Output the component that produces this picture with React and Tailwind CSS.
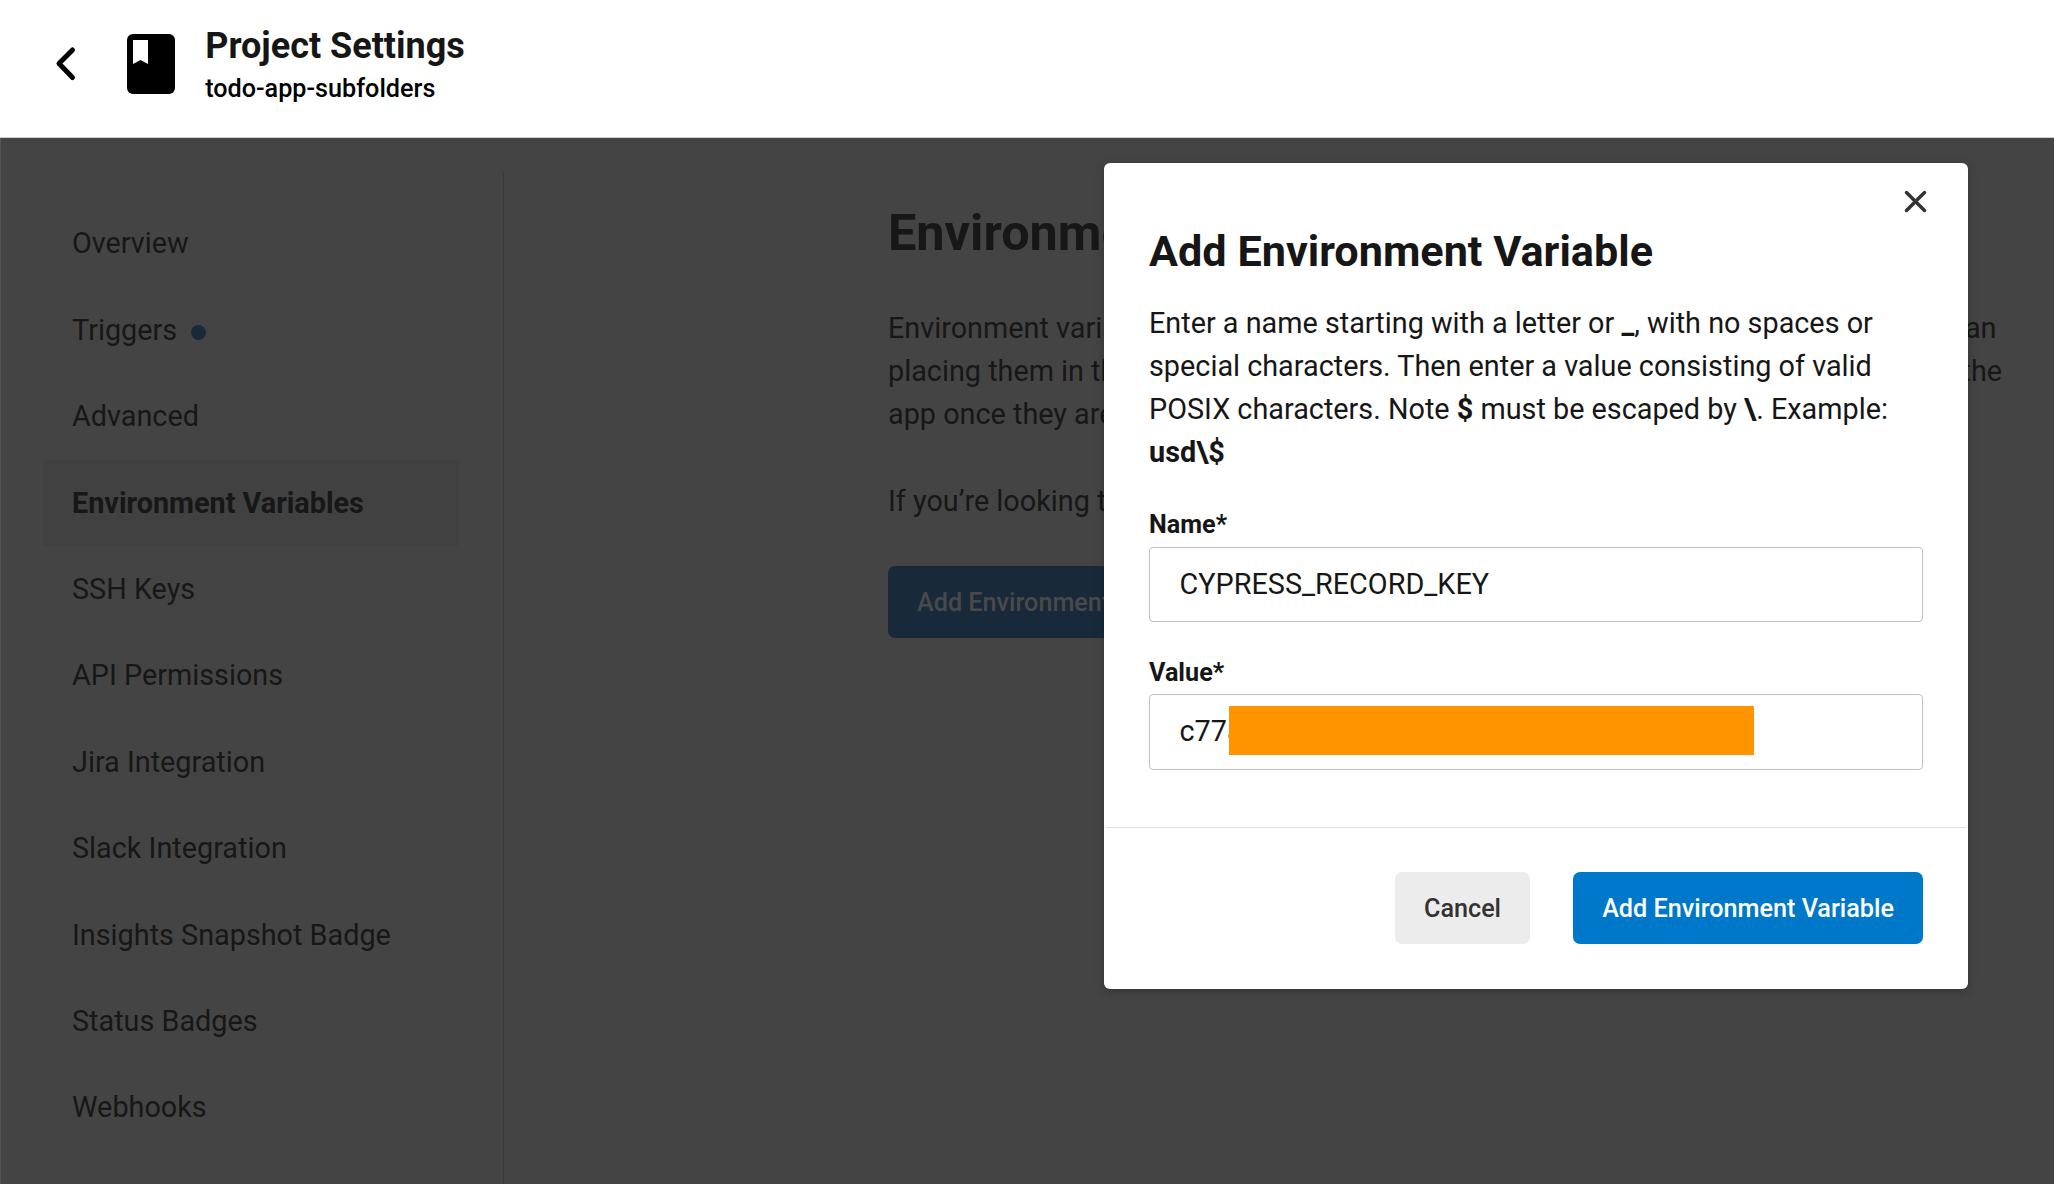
const navItems = [
  { label: "Overview" },
  { label: "Triggers", dot: true },
  { label: "Advanced" },
  { label: "Environment Variables", active: true },
  { label: "SSH Keys" },
  { label: "API Permissions" },
  { label: "Jira Integration" },
  { label: "Slack Integration" },
  { label: "Insights Snapshot Badge" },
  { label: "Status Badges" },
  { label: "Webhooks" },
];

function Header() {
  return (
    <header className="flex h-[138px] shrink-0 border-b border-[#cfcfcf] bg-white">
      <svg className="mt-[44px] ml-[52px] h-[39px] w-[27px] shrink-0" viewBox="0 0 27 39" fill="none" stroke="#000" strokeWidth="5" strokeLinecap="round" strokeLinejoin="round">
        <path d="M20.500 6L7 19.500L20.500 33.500" />
      </svg>
      <svg className="mt-[34px] ml-[48px] h-[60px] w-[48px] shrink-0" viewBox="0 0 48 60">
        <rect width="48" height="60" rx="6" fill="#000" />
        <path d="M6 6H21V30L13.500 26L6 30Z" fill="#fff" />
      </svg>
      <div className="ml-[30.200px] flex flex-col pt-[21px] whitespace-nowrap">
        <h1 className="text-[36px] leading-[50px] font-bold text-[#161616]">Project Settings</h1>
        <p className="text-[25.2px] leading-[36px] font-medium text-black">todo-app-subfolders</p>
      </div>
    </header>
  );
}

function Sidebar() {
  return (
    <nav className="mt-[34px] w-[503px] shrink-0 border-r border-[#393939] pt-[28.800px] pl-[42px]">
      {navItems.map((item) => (
        <div
          key={item.label}
          className={`flex h-[86.400px] w-[416px] items-center pl-[29px] text-[28.800px] whitespace-nowrap ${item.active ? "bg-[#414141] font-bold" : ""}`}
        >
          {item.label}
          {item.dot && <span className="mt-1 ml-[14px] size-[15px] rounded-full bg-[#182a3a]" />}
        </div>
      ))}
    </nav>
  );
}

function Content() {
  return (
    <main className="ml-[384px] pt-[58px] whitespace-nowrap">
      <h2 className="text-[50.400px] leading-[74px] font-bold">Environment Variables</h2>
      <p className="mt-[37px] text-[28.800px] leading-[43.200px]">
        Environment variables let you add sensitive data (e.g. API keys) to your jobs rather than
        <br />
        placing them in the repository. The value of the variables cannot be read or edited in the
        <br />
        app once they are set.
      </p>
      <p className="mt-[43.200px] text-[28.800px] leading-[43.200px]">
        If you’re looking to share environment variables across projects, try Contexts.
      </p>
      <button className="mt-[43px] h-[72px] rounded-[7px] bg-[#182a3a] px-[29px] pt-[1px] text-[25.200px] font-medium text-[#494949]">
        Add Environment Variable
      </button>
    </main>
  );
}

function Field({ label, value, className, inputClassName, redacted }) {
  return (
    <div className={className}>
      <div className="text-[25.200px] leading-[36px] font-bold">{label}</div>
      <div className={`relative flex items-center rounded-[4px] border border-[#bfbfbf] pl-[29.500px] text-[28.800px] ${inputClassName}`}>
        {value}
        {redacted && <span className="absolute top-[11px] left-[79px] h-[49px] w-[525px] bg-[#ff9300]" />}
      </div>
    </div>
  );
}

function Dialog() {
  return (
    <section className="absolute top-[163px] left-[1104px] flex h-[826px] w-[864px] flex-col rounded-[6px] bg-white text-[#161616] shadow-[0_2px_10px_rgba(0,0,0,0.250)]">
      <div className="flex h-[62px] justify-end pt-[26px] pr-[41px]">
        <svg className="size-[24px]" viewBox="0 0 24 24" fill="none" stroke="#333" strokeWidth="3.500" strokeLinecap="round">
          <path d="M3.500 3.500L21.500 21.500M21.500 3.500L3.500 21.500" />
        </svg>
      </div>
      <div className="px-[45px] whitespace-nowrap">
        <h2 className="text-[43.200px] leading-[54px] font-bold">Add Environment Variable</h2>
        <p className="mt-[23px] text-[28.800px] leading-[43px]">
          Enter a name starting with a letter or <b>_</b>, with no spaces or
          <br />
          special characters. Then enter a value consisting of valid
          <br />
          POSIX characters. Note <b>$</b> must be escaped by <b>\</b>. Example:
          <br />
          <b>usd\$</b>
        </p>
        <Field label="Name*" value="CYPRESS_RECORD_KEY" className="mt-[33px]" inputClassName="mt-[4px] h-[75px]" />
        <Field label="Value*" value="c77a" className="mt-[33px]" inputClassName="mt-[3px] h-[76px] pb-[1px]" redacted />
      </div>
      <div className="mx-[2px] mt-auto flex h-[162px] gap-[43px] border-t border-[#dedede] pt-[44px] pr-[43px] text-[25.200px] font-medium">
        <button className="ml-auto h-[72px] w-[135px] rounded-[7px] bg-[#ececec] pt-[2px] text-[#333]">Cancel</button>
        <button className="h-[72px] w-[350px] rounded-[7px] bg-[#0078ca] pt-[2px] whitespace-nowrap text-white">Add Environment Variable</button>
      </div>
    </section>
  );
}

export default function App() {
  return (
    <div className="relative flex h-[1184px] w-[2054px] flex-col overflow-hidden font-['Roboto',sans-serif]">
      <Header />
      <div className="flex flex-1 border-l border-[#555] bg-[#444] text-[#171717]">
        <Sidebar />
        <Content />
      </div>
      <Dialog />
    </div>
  );
}
